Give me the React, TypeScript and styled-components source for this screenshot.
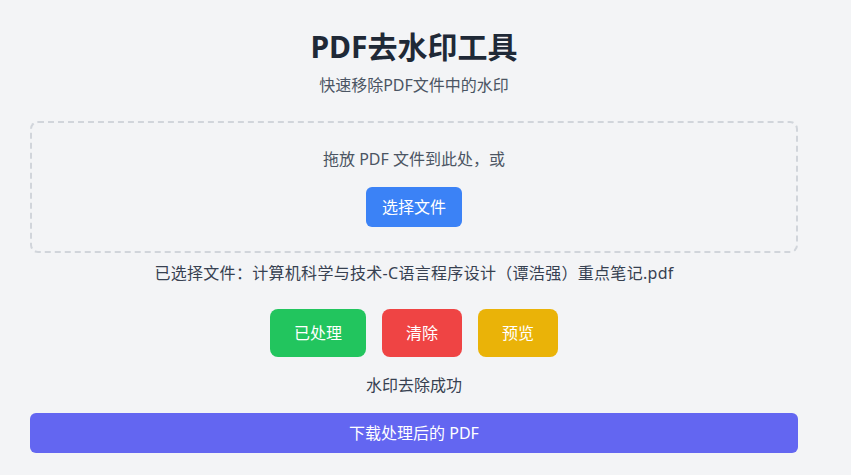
import React from "react";
import styled, { createGlobalStyle } from "styled-components";

const GlobalStyle = createGlobalStyle`
  html, body {
    margin: 0;
    padding: 0;
    background: #f3f4f6;
  }
  body {
    font-family: "Noto Sans", "Noto Sans CJK SC", sans-serif;
    color: #374151;
  }
  * { box-sizing: border-box; }
`;

const Page = styled.div`
  min-height: 475px;
  padding: 29px 53px 24px 30px;
`;

const Container = styled.main`
  width: 768px;
  display: flex;
  flex-direction: column;
  align-items: stretch;
`;

const Title = styled.h1`
  margin: 0;
  font-size: 30px;
  line-height: 36px;
  font-weight: 700;
  color: #1f2937;
  text-align: center;
`;

const Subtitle = styled.p`
  margin: 8px 0 0;
  font-size: 16px;
  line-height: 24px;
  color: #4b5563;
  text-align: center;
`;

const DropZone = styled.div`
  margin-top: 24px;
  border: 2px dashed #d1d5db;
  border-radius: 8px;
  padding: 24px;
  display: flex;
  flex-direction: column;
  align-items: center;
  gap: 16px;
`;

const DropText = styled.p`
  margin: 0;
  font-size: 16px;
  line-height: 24px;
  color: #4b5563;
`;

const SelectButton = styled.button`
  border: none;
  border-radius: 6px;
  background: #3b82f6;
  color: #ffffff;
  font-family: inherit;
  font-size: 16px;
  line-height: 24px;
  padding: 8px 16px;
  cursor: pointer;
`;

const FileName = styled.p`
  margin: 8px 0 0;
  font-size: 16px;
  line-height: 24px;
  color: #374151;
  text-align: center;
  letter-spacing: 0.3px;
`;

const ActionRow = styled.div`
  margin-top: 24px;
  display: flex;
  justify-content: center;
  gap: 16px;
`;

const ActionButton = styled.button<{ $bg: string }>`
  border: none;
  border-radius: 8px;
  background: ${(p) => p.$bg};
  color: #ffffff;
  font-family: inherit;
  font-size: 16px;
  line-height: 24px;
  padding: 12px 24px;
  cursor: pointer;
`;

const Status = styled.p`
  margin: 16px 0 0;
  font-size: 16px;
  line-height: 24px;
  color: #374151;
  text-align: center;
`;

const DownloadButton = styled.button`
  margin-top: 16px;
  width: 100%;
  border: none;
  border-radius: 6px;
  background: #6366f1;
  color: #ffffff;
  font-family: inherit;
  font-size: 16px;
  line-height: 24px;
  padding: 8px 16px;
  cursor: pointer;
`;

export default function App() {
  return (
    <>
      <GlobalStyle />
      <Page>
        <Container>
          <Title>PDF去水印工具</Title>
          <Subtitle>快速移除PDF文件中的水印</Subtitle>
          <DropZone>
            <DropText>拖放 PDF 文件到此处，或</DropText>
            <SelectButton>选择文件</SelectButton>
          </DropZone>
          <FileName>已选择文件：计算机科学与技术-C语言程序设计（谭浩强）重点笔记.pdf</FileName>
          <ActionRow>
            <ActionButton $bg="#22c55e">已处理</ActionButton>
            <ActionButton $bg="#ef4444">清除</ActionButton>
            <ActionButton $bg="#eab308">预览</ActionButton>
          </ActionRow>
          <Status>水印去除成功</Status>
          <DownloadButton>下载处理后的 PDF</DownloadButton>
        </Container>
      </Page>
    </>
  );
}
